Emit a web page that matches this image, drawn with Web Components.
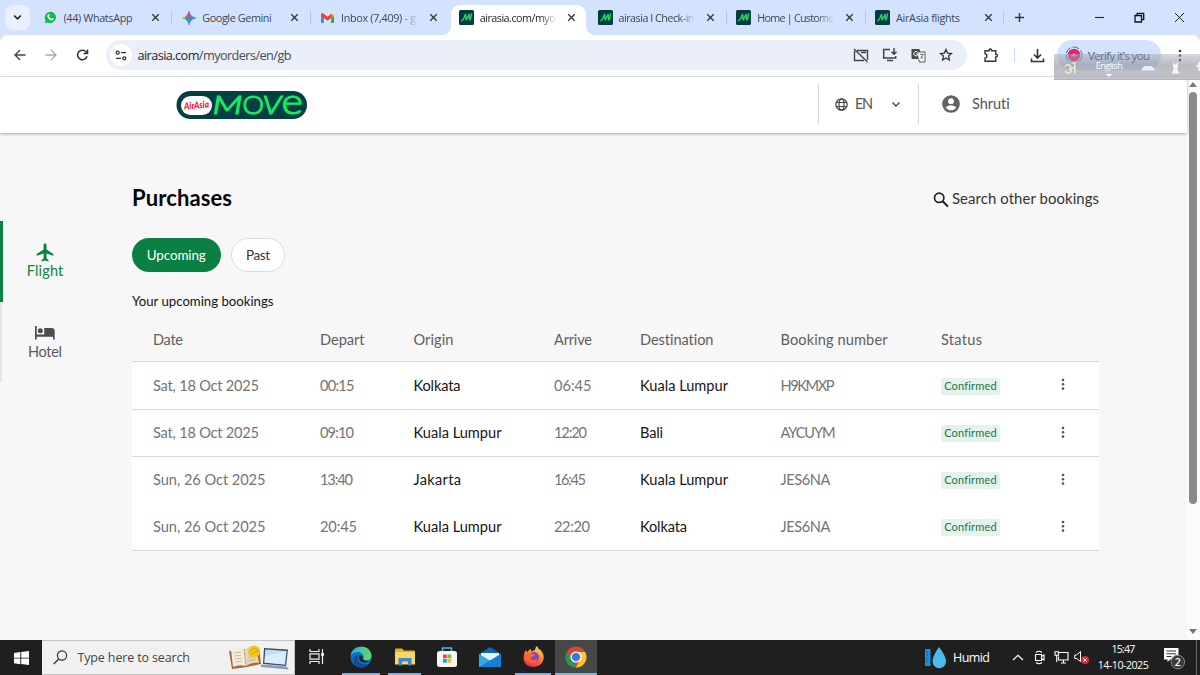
<!DOCTYPE html>
<html lang="en">
<head>
<meta charset="utf-8">
<title>Purchases</title>
<style>
html,body{margin:0;height:100%;overflow:hidden;background:#f7f7f7}
</style>
</head>
<body>
<browser-window></browser-window>
<script>
const define = (name, css, html, extra) => customElements.define(name, class extends HTMLElement {
  constructor() {
    super();
    this.attachShadow({ mode: 'open' });
  }
  connectedCallback() {
    if (this.shadowRoot.firstChild) return;
    const t = document.createElement('template');
    t.innerHTML = '<style>*{box-sizing:border-box}svg{display:block;flex:none}' + css + '</style>' + (typeof html === 'function' ? html(this) : html);
    this.shadowRoot.append(t.content.cloneNode(true));
    if (extra) extra(this);
  }
});

/* Text whose tracking is set so that it spans the width in "w". */
define('fit-text', ':host{display:inline-block;white-space:nowrap}span{display:inline-block}', '<span><slot></slot></span>', el => {
  const w = +el.getAttribute('w');
  if (!w) return;
  const n = el.textContent.length;
  const natural = el.shadowRoot.querySelector('span').getBoundingClientRect().width;
  if (natural) el.style.letterSpacing = ((w - natural) / Math.max(1, n - 1)).toFixed(3) + 'px';
  el.style.width = w + 'px';
});

const MARK = '<svg width="15" height="15" viewBox="0 0 15 15"><rect width="15" height="15" rx="1.5" fill="#053a40"/><path d="M2.6 10.6Q4 10.4 5 8L6.5 4.3L7.2 9.8L10.2 4.3L10.5 9.8Q11.5 10.6 12.6 4" fill="none" stroke="#22d966" stroke-width="1.4" stroke-linecap="round" stroke-linejoin="round"/></svg>';
const FAV = {
  move: MARK,
  whatsapp: '<svg width="13" height="13" viewBox="0 0 14 14"><path d="M7 .8a6.1 6.1 0 1 1-3 11.5L.8 13.2l.9-3.1A6.1 6.1 0 0 1 7 .8z" fill="#10bd45"/><path d="M4.5 3.6c.7-.6 1.1-.2 1.6 1.3L5.4 6c.5 1.100 1.300 1.900 2.500 2.400l1-.9c1.500.6 1.900 1 1.500 1.600-1.300 2-3.900.9-5.400-.7S3 4.900 4.500 3.600z" fill="#fff"/></svg>',
  gemini: '<svg width="14" height="14" viewBox="0 0 14 14"><defs><linearGradient id="g" x1="0" y1=".5" x2="1" y2=".5"><stop offset="0" stop-color="#f6b52b"/><stop offset=".3" stop-color="#3fa564"/><stop offset=".5" stop-color="#3f83f0"/><stop offset="1" stop-color="#3a82f5"/></linearGradient></defs><path d="M7 0Q8 6 14 7Q8 8 7 14Q6 8 0 7Q6 6 7 0z" fill="url(#g)" stroke="url(#g)" stroke-width=".6"/><path d="M7 .2Q7.800 4 9.500 5.300L7 6.500L4.700 5.200Q6.300 4 7 .2z" fill="#ee4b48"/></svg>',
  gmail: '<svg width="13" height="10" viewBox="0 0 13 10"><path d="M0 1.500V9q0 .9.900.9h2V4z" fill="#4285f4"/><path d="M13 1.500V9q0 .9-.9.900h-2V4z" fill="#34a853"/><path d="M10.100.8 13 1.200v1.600l-2.900 2.300z" fill="#fbbc04"/><path d="M0 1.500C0 .1 1.400-.2 2.400.6L6.500 3.700 10.600.6v4L6.500 7.700 0 2.800z" fill="#ea4335"/></svg>'
};

define('browser-tab', `
:host{display:block;height:35px;padding-top:5px;position:relative}
.t{height:30px;margin-left:2px;margin-right:2px;display:flex;align-items:center;padding:0 0 5px 7.500px;color:#3c4654}
:host([active]) .t{background:#fff;border-radius:9px 9px 0 0;color:#1f1f1f}
:host([active]) .t:before,:host([active]) .t:after{content:"";position:absolute;bottom:0;width:8px;height:8px}
:host([active]) .t:before{left:-6px;background:radial-gradient(circle at 0 0,transparent 7.500px,#fff 8px)}
:host([active]) .t:after{right:-6px;background:radial-gradient(circle at 100% 0,transparent 7.500px,#fff 8px)}
.f{width:15px;display:flex;justify-content:center}
.n{margin-left:6px;width:77px;overflow:hidden;font-size:10.800px;line-height:15px}
.n.fade{-webkit-mask:linear-gradient(90deg,#000 78%,transparent)}
.x{margin-left:10.500px}
.s{position:absolute;right:0;top:11px;width:1px;height:13px;background:#a8c7fa}`,
el => `<div class="t"><span class="f">${FAV[el.getAttribute('icon')]}</span><span class="n ${el.hasAttribute('fade') ? 'fade' : ''}"><fit-text w="${el.getAttribute('w')}">${el.textContent}</fit-text></span>
<svg class="x" width="9" height="9" viewBox="0 0 9 9"><path d="M1.300 1.300 7.700 7.700M7.700 1.300 1.300 7.700" stroke="#333" stroke-width="1.300"/></svg></div>${el.hasAttribute('sep') ? '<i class="s"></i>' : ''}`);

define('tab-strip', `
:host{display:flex;height:35px;background:#d3e3fd;width:1200px}
.d{margin:5px 3px 0 5px;width:25px;height:25px;border-radius:8px;background:#e9f0fe;display:grid;place-items:center}
.tabs{display:grid;grid-template-columns:repeat(7,138.750px)}
.p{margin:12px 0 0 10px}
.w{margin-left:auto;display:flex;gap:29px;padding:12px 15.500px 0 0}`,
`<div class="d"><svg width="9" height="7" viewBox="0 0 9 7"><path d="M1.200 1.500 4.500 4.800 7.800 1.500" fill="none" stroke="#1f1f1f" stroke-width="1.600"/></svg></div>
<div class="tabs">
<browser-tab icon="whatsapp" w="69" sep>(44) WhatsApp</browser-tab>
<browser-tab icon="gemini" w="69.500" sep>Google Gemini</browser-tab>
<browser-tab icon="gmail" w="75" fade>Inbox (7,409) - g</browser-tab>
<browser-tab icon="move" w="76" fade active>airasia.com/myo</browser-tab>
<browser-tab icon="move" w="76" fade sep>airasia I Check-in</browser-tab>
<browser-tab icon="move" w="77" fade sep>Home | Custome</browser-tab>
<browser-tab icon="move" w="64" sep>AirAsia flights</browser-tab>
</div>
<svg class="p" width="11" height="11" viewBox="0 0 11 11"><path d="M5.500 1v9M1 5.500h9" stroke="#333" stroke-width="1.400"/></svg>
<div class="w">
<svg width="10" height="10"><path d="M0 5.500h9" stroke="#222" stroke-width="1.100"/></svg>
<svg width="11" height="11" viewBox="0 0 11 11"><path d="M1 3.500h6.500V10H1zM3.200 3.500V1.300H9.700V7.700H7.500" fill="none" stroke="#111" stroke-width="1.300"/></svg>
<svg width="11" height="11" viewBox="0 0 11 11"><path d="M1 1l9 9M10 1l-9 9" stroke="#222" stroke-width="1"/></svg></div>`);

define('tool-bar', `
:host{display:block;background:#d3e3fd;width:1200px}
.b{background:#fff;border-radius:8px 8px 0 0;height:42px;border-bottom:1px solid #e7e9ec;display:flex;align-items:center;padding:0 14px 1px 12.500px;font-size:12.700px;color:#474b52}
.nav{display:flex;gap:17.500px;width:93px}
.o{width:861px;height:30px;border-radius:15px;background:#ebeff8;display:flex;align-items:center;padding:0 14px 0 4px}
.tune{width:22px;height:22px;border-radius:50%;background:#fff;display:grid;place-items:center;margin-right:6px}
.u b{font-weight:400;color:#1f1f1f}
.acts{margin-left:auto;display:flex;gap:13px;align-items:center}
.r{display:flex;align-items:center;margin-left:16px}
.bar{width:1px;height:14px;background:#c5d8f8;margin:0 15.500px 0 15px}
.v{margin-left:12px;width:104px;height:30px;border-radius:15px;background:#d3e3fd;display:flex;align-items:center;padding-left:8px;color:#25405f;font-size:11.500px}
.v fit-text{margin-left:5px}
.m{margin-left:17px}`,
`<div class="b"><div class="nav">
<svg width="14" height="14" viewBox="0 0 14 14"><path d="M12.500 7H2M7 2 2 7l5 5" fill="none" stroke="#444" stroke-width="1.400"/></svg>
<svg width="14" height="14" viewBox="0 0 14 14"><path d="M1.500 7H12M7 2l5 5-5 5" fill="none" stroke="#aaa" stroke-width="1.300"/></svg>
<svg width="13" height="14" viewBox="0 0 13 14"><path d="M11 8.300A4.800 4.800 0 1 1 10 3.800L11 5M11.500 1.500V5.500H7.500" fill="none" stroke="#333" stroke-width="1.500"/></svg></div>
<div class="o"><span class="tune"><svg width="12" height="11" viewBox="0 0 12 11"><g fill="none" stroke="#333" stroke-width="1.300"><circle cx="2.700" cy="2.700" r="1.500"/><path d="M6 2.700h5M1 8.300h5"/><circle cx="9.300" cy="8.300" r="1.500"/></g></svg></span>
<fit-text class="u" w="154"><b>airasia.com</b>/myorders/en/gb</fit-text>
<div class="acts">
<svg width="16" height="15" viewBox="0 0 16 15"><path d="M4 2.500h10.500V12M1.500 3v9.500H11M1 1l13.500 13M8 4.500h5" fill="none" stroke="#444" stroke-width="1.400"/></svg>
<svg width="16" height="14" viewBox="0 0 16 14"><path d="M8 1.500H1.700v8.500h12V8M5 12.500h6M12 0v6M9.500 3.700 12 6.200l2.500-2.500" fill="none" stroke="#444" stroke-width="1.500"/></svg>
<svg width="15" height="15" viewBox="0 0 15 15"><path d="M1 1h7.500L11 11H1.500Q.500 11 .5 10V1.500z" fill="#484848"/><path d="M7 4h7V14H8.500L7.600 11" fill="#fff" stroke="#555"/><path d="M6.700 4.300A2.200 2.200 0 1 0 6.800 7V6H5" fill="none" stroke="#fff"/><path d="M8.800 6.500h4M11 5.500v1M12 7q-.6 2-2.800 3.500M10 8l2 3" fill="none" stroke="#555" stroke-width=".8"/></svg>
<svg width="14" height="14" viewBox="0 0 14 14"><path d="M7 1.500 8.600 5.100 12.500 5.500 9.600 8.100 10.400 12 7 10 3.600 12 4.400 8.100 1.500 5.500 5.400 5.100z" fill="none" stroke="#333" stroke-width="1.300"/></svg></div></div>
<div class="r"><svg width="16" height="15" viewBox="0 0 16 15"><path d="M2 2.700H6Q6 1 7.300 1T8.600 2.700H12.700V6.300q1.800 0 1.800 1.300t-1.800 1.300V13.300H2V10.100q2-.3 2-2.200T2 5.700z" fill="none" stroke="#333" stroke-width="1.400"/></svg><i class="bar"></i>
<svg width="15" height="15" viewBox="0 0 15 15"><path d="M7.500 1v8.500M4 6.500 7.500 10 11 6.500M1.500 10.500v3h12v-3" fill="none" stroke="#333" stroke-width="1.600"/></svg>
<div class="v"><svg width="18" height="18" viewBox="0 0 18 18"><circle cx="9" cy="9" r="8" fill="none" stroke="#4d6a9c" stroke-width="1" stroke-dasharray="7 2"/><circle cx="9" cy="9" r="6.300" fill="#df2469"/><circle cx="9" cy="9" r="1.800" fill="#f28bac"/></svg><fit-text w="62">Verify it's you</fit-text></div>
<svg class="m" width="4" height="15" viewBox="0 0 4 15"><g fill="#333"><circle cx="2" cy="3" r="1.300"/><circle cx="2" cy="7.500" r="1.300"/><circle cx="2" cy="12" r="1.300"/></g></svg></div></div>`);

define('language-bar', `
:host{display:block;position:absolute;left:1054px;top:54px;width:146px;height:26px;background:linear-gradient(rgba(172,177,188,.5),rgba(128,132,142,.55) 45%,rgba(172,173,183,.72));border-bottom:1px solid #a9b3cf;color:#fff;font:9px "Open Sans",sans-serif;overflow:hidden}
div{display:grid;grid-template-columns:35px 40px 1fr;align-items:start}
.e{text-align:center;line-height:11px;padding-top:6px}
.e svg{margin:3px auto 0}`,
`<div><svg width="30" height="24" viewBox="0 0 30 24"><path d="M11 13q1-3 4-2t.5 4q3 1 1 3.300-3 1.800-5.500-1.300M17 14q2 1 3.500-1M20.800 9v10.500M17.500 9h5" fill="none" stroke="#efe9ca" stroke-width="1.500"/></svg>
<div class="e" style="display:block"><fit-text w="27">English</fit-text><svg width="6" height="3"><path d="M0 0h6L3 3z" fill="#fff"/></svg></div>
<svg width="71" height="26" viewBox="0 0 71 26"><path d="M15 12h8l3.500 4.500H12z" fill="#e5edff"/><path d="M44 8l2 3 3-3v5l-1 1 2.500 5.500H43l2-5.500-1-1z" fill="#f5f5f5"/><path d="M70 8v9M67 12h4" stroke="#eee" stroke-width="2"/></svg></div>`);

define('site-header', `
:host{display:flex;align-items:center;height:56px;width:1187px;background:#fff;box-shadow:0 1px 3px rgba(0,0,0,.32);position:relative;font-size:14.500px;color:#535353;padding:0 0 2px 176px}
.l{width:101px;height:40px;border:solid #d8d8d8;border-width:0 1px;margin-left:511px;display:flex;align-items:center;padding:0 17px 0 16px}
.l fit-text{margin-left:7px}.c{margin-left:auto}
.a{margin:0 12px 0 23px}
fit-text{margin-top:-1px}
.logo{margin-top:1px;overflow:visible}`,
`<svg class="logo" width="131" height="28" viewBox="0 0 131 28"><rect x=".5" width="130.500" height="28" rx="14" fill="#053e43"/><rect x="5" y="5" width="31" height="19" rx="9.500" fill="#fff"/>
<text x="8" y="17.500" transform="rotate(-5 20 15)" textLength="25" lengthAdjust="spacingAndGlyphs" font-family="Lato" font-size="9.500" font-style="italic" font-weight="900" fill="#e51b24">AirAsia</text>
<g font-family="Lato" fill="#19e765" stroke="#19e765" stroke-width="1.100" font-weight="300" font-size="25"><text x="36.500" y="23" font-style="italic" textLength="30" lengthAdjust="spacingAndGlyphs">M</text><text x="66.500" y="23" textLength="21.500" lengthAdjust="spacingAndGlyphs">O</text><text x="86.500" y="23" font-style="italic" textLength="19" lengthAdjust="spacingAndGlyphs">V</text><text x="105.500" y="22.800" font-size="35" textLength="21.500" lengthAdjust="spacingAndGlyphs">e</text></g></svg>
<div class="l"><svg width="13" height="13" viewBox="0 0 13 13"><g fill="none" stroke="#444" stroke-width="1.200"><circle cx="6.500" cy="6.500" r="5.700"/><ellipse cx="6.500" cy="6.500" rx="2.500" ry="5.700"/><path d="M1 4.500h11M1 8.500h11"/></g></svg><fit-text w="18">EN</fit-text><svg class="c" width="10" height="7" viewBox="0 0 10 7"><path d="M1.500 1.500 5 5l3.500-3.500" fill="none" stroke="#444" stroke-width="1.400"/></svg></div>
<svg class="a" width="18" height="18" viewBox="0 0 18 18"><circle cx="9" cy="9" r="8.800" fill="#626262"/><circle cx="9" cy="6.200" r="2.900" fill="#fff"/><path d="M3.700 12.200q5.300-4 10.600 0Q12.500 15.300 9 15.300T3.700 12.200z" fill="#fff"/></svg><fit-text w="38">Shruti</fit-text>`);

define('nav-item', `
:host{display:flex;flex-direction:column;align-items:center;height:80.500px;width:88px;padding:21px 0 0;color:#5a5a5a;border-left:2px solid #e4e5e8;font-size:14.500px}
:host([active]){color:#0f8344;border-left:3px solid #0a8043;width:87px}
::slotted(fit-text){line-height:18px}`, '<slot></slot>');

define('side-nav', ':host{display:block;padding-top:88px;width:132px;flex:none}.i{height:20px;display:grid;place-items:center}',
`<nav-item active><div class="i"><svg width="18" height="19" viewBox="0 0 18 19"><path d="M17.500 12.800v-1.900L10.500 6.500V1.800a1.400 1.500 0 0 0-2.900 0V6.500L.6 10.900v1.900l7-2.200v4.900l-2 1.400v1.500L9.050 17.500l3.450.9v-1.500l-2-1.400v-4.900z" fill="#0a8043"/></svg></div><fit-text w="36.500">Flight</fit-text></nav-item>
<nav-item><div class="i"><svg width="20" height="14" viewBox="0 0 20 14"><circle cx="5.300" cy="4.700" r="2.500" fill="#4b4c50"/><path d="M0 0h1.700v8.500h7.500V2h7.300q3.200 0 3.200 3.300V13.600H18v-2.800H1.700v2.800H0z" fill="#4b4c50"/></svg></div><fit-text w="34">Hotel</fit-text></nav-item>`);

define('status-chip', ':host{display:inline-flex;height:17px;width:59px;border-radius:2px;background:#e3f3eb;color:#22734b;font-size:11px;line-height:16.500px;justify-content:center;margin-top:2px}span{letter-spacing:.17px}', '<span><slot></slot></span>');

const COLS = 'grid-template-columns:167px 93.500px 140.500px 86px 140.500px 160.500px 117px 1fr;padding-left:21px;align-items:center;';
define('booking-row', `
:host{display:grid;${COLS}height:47.500px;background:#fff;font-size:14.600px;color:#747474;border-bottom:1px solid #d9d9d9}
:host([joined]){border-bottom-color:transparent;height:46.500px}
b{font-weight:400;color:#151515}`,
el => {
  const [d, dep, o, arr, de, n] = el.getAttribute('data').split('|');
  const W = { 'Sat, 18 Oct 2025': 106, 'Sun, 26 Oct 2025': 112.500, 'Kolkata': 47, 'Kuala Lumpur': 88, 'Jakarta': 47.500, 'Bali': 23, 'H9KMXP': 54, 'AYCUYM': 55, 'JES6NA': 50, '00:15': 34.500, '09:10': 34, '13:40': 33, '20:45': 37, '06:45': 37.500, '12:20': 33, '16:45': 32, '22:20': 36 };
  const t = s => `<fit-text w="${W[s]}">${s}</fit-text>`;
  return `<span>${t(d)}</span><span>${t(dep)}</span><b>${t(o)}</b><span>${t(arr)}</span><b>${t(de)}</b><span>${t(n)}</span><span><status-chip>Confirmed</status-chip></span>
<svg width="10" height="14" viewBox="0 0 10 14"><g fill="#555"><circle cx="5" cy="2" r="1.300"/><circle cx="5" cy="6.300" r="1.300"/><circle cx="5" cy="10.600" r="1.300"/></g></svg>`;
});

define('purchase-view', `
:host{display:block;width:967px;padding-top:51px;color:#151515}
.h{display:flex;justify-content:space-between;align-items:center;height:27px}
.h h1{margin:0;font-size:22px;font-weight:700;line-height:27px;color:#050505}
.s{display:flex;align-items:center;gap:3px;font-size:14.900px;color:#333}
.s svg{margin-top:3px}
.pills{display:flex;gap:10.500px;margin-top:27px;font-size:13.400px}
.pills span{height:34px;border-radius:17px;display:grid;place-items:center;width:88.500px;background:#0a8043;color:#fff}
.pills .o{width:54px;background:#fff;border:1px solid #ddd;color:#333}
.y{margin-top:19.500px;height:18px;line-height:18px;font-size:13.200px}
.th{display:grid;${COLS}height:52.500px;padding-top:8px;border-bottom:1px solid #d9d9d9;font-size:14.600px;color:#606060}`,
`<div class="h"><h1><fit-text w="100">Purchases</fit-text></h1><div class="s"><svg width="16" height="17" viewBox="0 0 16 17"><circle cx="6.200" cy="6.800" r="4.700" fill="none" stroke="#222" stroke-width="1.700"/><path d="M9.700 10.300 15 15.600" stroke="#222" stroke-width="2"/></svg><fit-text w="147">Search other bookings</fit-text></div></div>
<div class="pills"><span><fit-text w="59">Upcoming</fit-text></span><span class="o"><fit-text w="24">Past</fit-text></span></div>
<div class="y"><fit-text w="141.500">Your upcoming bookings</fit-text></div>
<div class="th"><fit-text w="30">Date</fit-text><fit-text w="44.500">Depart</fit-text><fit-text w="40">Origin</fit-text><fit-text w="38">Arrive</fit-text><fit-text w="74">Destination</fit-text><fit-text w="107">Booking number</fit-text><fit-text w="41">Status</fit-text></div>
<booking-row data="Sat, 18 Oct 2025|00:15|Kolkata|06:45|Kuala Lumpur|H9KMXP"></booking-row>
<booking-row data="Sat, 18 Oct 2025|09:10|Kuala Lumpur|12:20|Bali|AYCUYM"></booking-row>
<booking-row joined data="Sun, 26 Oct 2025|13:40|Jakarta|16:45|Kuala Lumpur|JES6NA"></booking-row>
<booking-row data="Sun, 26 Oct 2025|20:45|Kuala Lumpur|22:20|Kolkata|JES6NA"></booking-row>`);

define('scroll-bar', ':host{display:flex;flex-direction:column;align-items:center;width:13px;background:#fcfcfc;padding:5px 1px 6px 0}i{width:8px;height:412px;border-radius:4px;background:#8a8a8a;margin-top:5px}.d{margin-top:auto}',
'<svg width="8" height="5"><path d="M0 5h8L4 0z" fill="#777"/></svg><i></i><svg class="d" width="8" height="5"><path d="M0 0h8L4 5z" fill="#777"/></svg>');

define('task-bar', `
:host{display:flex;height:35px;width:1200px;background:#1f1f1f;color:#fff;font-size:12.500px}
.st{width:42px;display:grid;place-items:center}
.se{width:253px;background:#f1f1f1;border:1px solid #c4c4c4;border-left:0;color:#454545;display:flex;align-items:center;padding-left:11px}
.se fit-text{margin-left:9.500px}.se .bk{margin-left:auto;margin-right:4px}
.ap{width:43px;display:grid;place-items:center;position:relative;border-bottom:2px solid transparent;background-clip:padding-box}
.run:after{content:"";position:absolute;left:4px;right:4px;bottom:-2px;height:2px;background:#86aee0}
.on{background:#484848;width:42px;background-clip:border-box}.on:after{left:0;right:0}
.tray{margin-left:auto;display:flex;align-items:center}
.tray>*{flex:none}
.ck{width:54px;text-align:center;font-size:10.700px;line-height:15.500px}`,
`<div class="st"><svg width="15" height="14" viewBox="0 0 15 14"><path d="M0 2 6.300 1v5.700H0zM7.200.900 15 0v6.700H7.200zM0 7.500h6.300v5.700L0 12.200zM7.200 7.500H15V14l-7.800-.9z" fill="#fff"/></svg></div>
<div class="se"><svg width="15" height="15" viewBox="0 0 15 15"><circle cx="9" cy="5.500" r="4.600" fill="none" stroke="#333" stroke-width="1.200"/><path d="M5.700 9 .7 14" stroke="#333" stroke-width="1.300"/></svg><fit-text w="112.500">Type here to search</fit-text>
<svg class="bk" width="62" height="27" viewBox="0 0 62 27"><path d="M1 7 31 4l2 16-14 3-15 2z" fill="#a66838"/><path d="M3 5.500Q10 2 16 6l2 16Q11 20 5 23z" fill="#f4eddc"/><path d="M16 6Q22 1 28 3l3 16q-7-1-13 3z" fill="#e4d7bb"/><path d="M16 6l2 16M6 9l7-1M6.500 12l7-1M7 15l7-1M7.500 18l7-1M20 11l7-2M20 14l8-2M21 17l7-2" stroke="#a99b82" stroke-width=".6"/><circle cx="26" cy="7.500" r="6" fill="#f4c51c"/><path d="M22 8q3-6 8-2M23 11q4-5 8-3" stroke="#dca10c" fill="none"/><path d="M36 4 60 5.500 58 22l-23-2z" fill="#3d4e68"/><path d="M37.300 5.500 58.600 7 57 20.500l-20.500-2z" fill="#bddcf8"/><path d="M37 12 58 7l-1.500 13.500-20-2z" fill="#dcecff"/><path d="M33 20.500 58.500 22.500 61 25.500 33 23z" fill="#8799bd"/></svg></div>
<div class="ap"><svg width="16" height="15" viewBox="0 0 16 15"><path d="M1 0v2.500h9V0M1 15v-2.500h9V15M1 4.800h9v5.400H1zM13.500 0v15" fill="none" stroke="#eee" stroke-width="1.200"/><path d="M12.300 4h2.500v3h-2.500z" fill="#fff"/></svg></div>
<div class="ap run" style="width:46px"><svg width="22" height="22" viewBox="0 0 22 22"><defs><linearGradient id="a"><stop stop-color="#29a9e5"/><stop offset="1" stop-color="#61db69"/></linearGradient></defs><circle cx="11" cy="11" r="10.500" fill="#0a73c9"/><path d="M.6 10C1.500-2.500 21.500-2.500 21.500 10c0 5-7 6-8.500 3 2-3-1-7-5-7C4 6 1.500 8 .6 10z" fill="url(#a)"/><path d="M8.500 9.500c-3 6 3 11 10.500 8-4 6-12 5-15 0-2-5 1-8 4.500-8z" fill="#174b93"/><path d="M9.500 9.500c2-1 4 1 3.300 3.300.8 2.200 4.200 2.200 6.200 1.400-1.500 2.200-4.500 2.800-7 1.500s-3.800-4-2.500-6.200z" fill="#1f1f1f"/></svg></div>
<div class="ap run" style="width:41px"><svg width="20" height="18" viewBox="0 0 20 18"><path d="M0 1.500Q0 .5 1 .5H7L9 2.500h10q1 0 1 1V15.500H0z" fill="#e9ab25"/><path d="M0 4h20V16.500H0z" fill="#fbd568"/><path d="M3.500 17.500V10h13v7.500h-3.500V13.500H7v4z" fill="#398bcb"/></svg></div>
<div class="ap" style="width:44px"><svg width="20" height="20" viewBox="0 0 20 20"><path d="M5.500 6V1h9v5" fill="none" stroke="#45b8e5" stroke-width="1.600"/><rect y="4" width="20" height="16" rx="2.500" fill="#f5f5f5"/><path d="M6 7.500h3.800v3.800H6z" fill="#e74a30"/><path d="M10.500 7.500h3.800v3.800h-3.800z" fill="#78b837"/><path d="M6 12h3.800v3.800H6z" fill="#269fdb"/><path d="M10.500 12h3.800v3.800h-3.800z" fill="#f4b72d"/></svg></div>
<div class="ap" style="width:42px"><svg width="22" height="20" viewBox="0 0 22 20"><path d="M0 7 11 0l11 7v8H0z" fill="#1163ad"/><path d="M2 6h18v9H2z" fill="#e9f5fd"/><path d="M0 7l11 6.500L22 7v13H0z" fill="#35a9e9"/><path d="M0 20 22 7v13z" fill="#1580d2"/></svg></div>
<div class="ap run" style="width:44px"><svg width="21" height="21" viewBox="0 0 21 21"><defs><linearGradient id="f" x1=".8" y1="0" x2=".3" y2="1"><stop stop-color="#ffe548"/><stop offset=".5" stop-color="#ff7b26"/><stop offset="1" stop-color="#ef285c"/></linearGradient></defs><path d="M12 4Q12 1.500 14 0q1 3 4 4.500 3.500 4 2.500 9-2 7-10 7.500Q1 20.500.500 12 .500 7 3 3.500q0 2 1.500 2.500Q6 3.500 8 3v2.500z" fill="url(#f)"/><circle cx="11" cy="11" r="5" fill="#8843c7"/><path d="M2 9Q5 6 8 7.500q3 0 4 2l-3 1q-2 1-1 3 3 2 6-1-1 6-7 4T2 9z" fill="#ff642e"/></svg></div>
<div class="ap run on"><svg width="22" height="22" viewBox="0 0 22 22"><circle cx="11" cy="11" r="10.500" fill="#dc4437"/><path d="M1.900 5.700 8 15l3 6.500A10.500 10.500 0 0 1 1.900 5.700z" fill="#21995a"/><path d="M11 6H20.200A10.500 10.500 0 0 1 10.800 21.500L15.500 13z" fill="#fbc928"/><circle cx="11" cy="11" r="5.600" fill="#fff"/><circle cx="11" cy="11" r="4.300" fill="#3c79e6"/></svg></div>
<div class="tray">
<svg width="21" height="22" viewBox="0 0 21 22"><path d="M0 2h5.500v17H0z" fill="#1593df"/><path d="M1 5h2M1 8h2M1 11h2M1 14h2" stroke="#126093"/><path d="M14 0q7 9 7 14.500a6.700 6.700 0 0 1-13.400 0Q7.600 9 14 0z" fill="#4db9ec"/></svg>
<fit-text w="37" style="margin:0 22px 0 7px">Humid</fit-text>
<svg width="12" height="7" viewBox="0 0 12 7"><path d="M1 6l5-4.700L11 6" fill="none" stroke="#fff" stroke-width="1.200"/></svg>
<svg width="11" height="15" viewBox="0 0 11 15" style="margin-left:10px"><path d="M1.500 4.500h6v6h-6zM7.500 6.500l2.500-1.500v5L7.500 8.500M2 2.500q3-2.500 6 0M2 12.500q3 2.500 6 0" fill="none" stroke="#fff" stroke-width="1.100"/></svg>
<svg width="15" height="13" viewBox="0 0 15 13" style="margin-left:9px"><path d="M5 1.500h9v7.500H4.500V5.500M7 12h5M9.500 9v3M1 .8h3.500v3.500H1zM2.700 4.300V11" fill="none" stroke="#fff" stroke-width="1.100"/></svg>
<svg width="15" height="15" viewBox="0 0 15 15" style="margin-left:5px"><path d="M.7 5h2L6.500 1.500v10L2.700 8.500h-2z" fill="none" stroke="#fff"/><circle cx="11" cy="10" r="4" fill="#dc2738"/><path d="M9.300 8.300l3.400 3.400M12.700 8.300l-3.400 3.400" stroke="#fff"/></svg>
<div class="ck" style="margin-left:7px"><fit-text w="24">15:47</fit-text><br><fit-text w="51">14-10-2025</fit-text></div>
<svg width="22" height="24" viewBox="0 0 22 24" style="margin:3px 10px 0 14px"><path d="M0 1h14.500v11.500H6L3.500 15v-2.500H0z" fill="#fff"/><path d="M2.500 4h9.500M2.500 6.800h9.500M2.500 9.500h5" stroke="#333"/><circle cx="13.800" cy="15" r="6.800" fill="#3b3b3b" stroke="#888"/><text x="13.800" y="18.800" text-anchor="middle" font-family="Open Sans" font-size="10.500" font-weight="600" fill="#fff">2</text></svg>
<i style="width:1px;height:35px;background:#666;margin-right:3px"></i></div>`);

define('browser-window', `
:host{display:block;position:relative;width:1200px;height:675px;font-family:"Open Sans","Noto Sans",sans-serif}
.page{display:flex;height:563px;font-family:Lato,"Open Sans",sans-serif;background:#f7f7f7}
.doc{width:1187px}.body{display:flex}`,
`<tab-strip></tab-strip><tool-bar></tool-bar><div class="page"><div class="doc"><site-header></site-header><div class="body"><side-nav></side-nav><purchase-view></purchase-view></div></div><scroll-bar></scroll-bar></div><task-bar></task-bar><language-bar></language-bar>`);
</script>
</body>
</html>
